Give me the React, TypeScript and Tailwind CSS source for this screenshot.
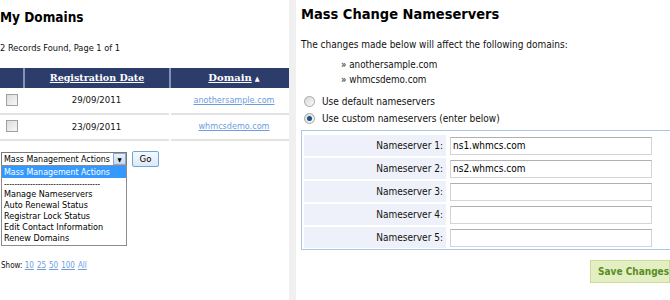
import React from "react";

const font = { fontFamily: 'Tahoma, "DejaVu Sans Condensed", "DejaVu Sans", sans-serif' };
const serif = { fontFamily: '"DejaVu Serif", "Liberation Serif", serif' };

export default function App() {
  const ns = ["ns1.whmcs.com", "ns2.whmcs.com", "", "", ""];
  return (
    <div className="w-[670px] h-[300px] overflow-hidden bg-white flex text-[10px] text-[#111]" style={font}>
      {/* Left */}
      <div className="w-[289px] shrink-0 flex flex-col">
        <h1 className="text-[13.5px] font-bold leading-[20px] mt-[7px] text-black">My Domains</h1>
        <div className="mt-[14px] text-[9.2px] leading-[14px]">2 Records Found, Page 1 of 1</div>
        <table className="mt-[13px] w-full border-collapse">
          <thead>
            <tr className="h-[20px] bg-[#2d3d6b] text-white text-[9.5px] font-bold">
              <th className="w-[24px] border-r-2 border-[#8592b5]"></th>
              <th className="w-[146px] border-r-2 border-[#8592b5]">
                <span className="underline" style={serif}>Registration Date</span>
              </th>
              <th className="pl-[8px]">
                <span className="underline text-[10px]" style={serif}>Domain</span> <span className="text-[7px]">▲</span>
              </th>
            </tr>
          </thead>
          <tbody>
            {[
              ["29/09/2011", "anothersample.com"],
              ["23/09/2011", "whmcsdemo.com"],
            ].map(([d, n]) => (
              <tr key={n} className="h-[26px] border-b-2 border-[#e2e2e2]">
                <td className="text-center align-middle">
                  <span className="inline-block w-[12px] h-[12px] border border-[#a0a0a0] bg-gradient-to-br from-[#dcdcdc] to-[#f8f8f8] align-middle mt-[-3px]"></span>
                </td>
                <td className="text-center border-r-2 border-white text-[9.5px]">{d}</td>
                <td className="text-center pl-[8px] text-[9px]">
                  <span className="text-[#6d9de0] underline">{n}</span>
                </td>
              </tr>
            ))}
          </tbody>
        </table>
        <div className="relative mt-[11px] ml-[1px] flex items-start gap-[5px] text-[8.8px]">
          <div className="w-[126px] h-[14px] border border-[#7a7a7a] flex items-center bg-white">
            <span className="flex-1 pl-[2px] leading-[12px] text-black whitespace-nowrap overflow-hidden">Mass Management Actions</span>
            <span className="w-[13px] h-[12px] border border-[#8fa7cf] bg-gradient-to-b from-[#e8f0fc] to-[#c7d9f3] flex items-center justify-center text-[6px] text-black">▼</span>
          </div>
          <button className="w-[27px] h-[16px] mt-[-1px] border border-[#6fa6d6] rounded-[2px] bg-gradient-to-b from-[#f4f9ff] to-[#dde9f6] text-[9.5px] leading-[12px] text-black">Go</button>
          <div className="absolute left-0 top-[13px] w-[126px] border border-[#8c8c8c] bg-white text-black leading-[11px] pb-[1px] text-[9px]">
            <div className="bg-[#3399ff] text-white pl-[2px] h-[12px] leading-[12px] whitespace-nowrap text-[8.8px]">Mass Management Actions</div>
            <div className="pl-[2px] h-[11px] leading-[13px] text-[8px] overflow-hidden whitespace-nowrap">-------------------------------------</div>
            {["Manage Nameservers", "Auto Renewal Status", "Registrar Lock Status", "Edit Contact Information", "Renew Domains"].map((t) => (
              <div key={t} className="pl-[2px] h-[11px] whitespace-nowrap">{t}</div>
            ))}
          </div>
        </div>
        <div className="mt-[93px] text-[8px] leading-[12px] ml-[1px]">
          Show:{" "}
          {["10", "25", "50", "100", "All"].map((s) => (
            <span key={s} className="text-[#6d9de0] underline mr-[3px]">{s}</span>
          ))}
        </div>
      </div>
      {/* Divider */}
      <div className="w-[7px] shrink-0 bg-[#f0f0f0]" />
      {/* Right */}
      <div className="w-[374px] shrink-0 pl-[5px] flex flex-col">
        <h2 className="text-[14.5px] font-bold leading-[20px] mt-[4px] text-black">Mass Change Nameservers</h2>
        <div className="mt-[14px] leading-[14px]">The changes made below will affect the following domains:</div>
        <div className="mt-[5px] ml-[40px] leading-[15px] text-[9.8px]">
          <div>» anothersample.com</div>
          <div>» whmcsdemo.com</div>
        </div>
        <div className="mt-[7px] flex flex-col gap-[3px] text-[10px]">
          <label className="flex items-center gap-[7px] ml-[3px] h-[14px]">
            <span className="w-[11px] h-[11px] rounded-full border border-[#a5a5a5] bg-gradient-to-br from-[#d8d8d8] to-[#fafafa]"></span>
            Use default nameservers
          </label>
          <label className="flex items-center gap-[7px] ml-[3px] h-[14px]">
            <span className="w-[11px] h-[11px] rounded-full border border-[#a5a5a5] bg-gradient-to-br from-[#d8d8d8] to-[#fafafa] flex items-center justify-center">
              <span className="w-[5px] h-[5px] rounded-full bg-[#1a4f8a]"></span>
            </span>
            Use custom nameservers (enter below)
          </label>
        </div>
        <div className="mt-[5px] w-[380px] border border-[#a9c9ea] pl-[2px] pt-[4px] pb-[1px] flex flex-col gap-[2px]">
          {ns.map((v, i) => (
            <div key={i} className="flex h-[21px]">
              <div className="w-[142px] bg-[#eef1f9] text-right pr-[3px] leading-[21px] text-[10px]">Nameserver {i + 1}:</div>
              <div className="pl-[4px] flex items-center">
                <div className="w-[202px] h-[18px] border border-[#d4d4d4] border-t-[#b0b0b0] pl-[2px] leading-[16px] text-[10px] text-black">{v}</div>
              </div>
            </div>
          ))}
        </div>
        <div className="mt-[10px] pl-[289px] flex">
          <button className="w-[100px] h-[23px] bg-[#e3efc2] border border-[#c9dd99] text-left pl-[7px] text-[10px] font-bold text-[#5a8c1f] whitespace-nowrap">Save Changes</button>
        </div>
      </div>
    </div>
  );
}
